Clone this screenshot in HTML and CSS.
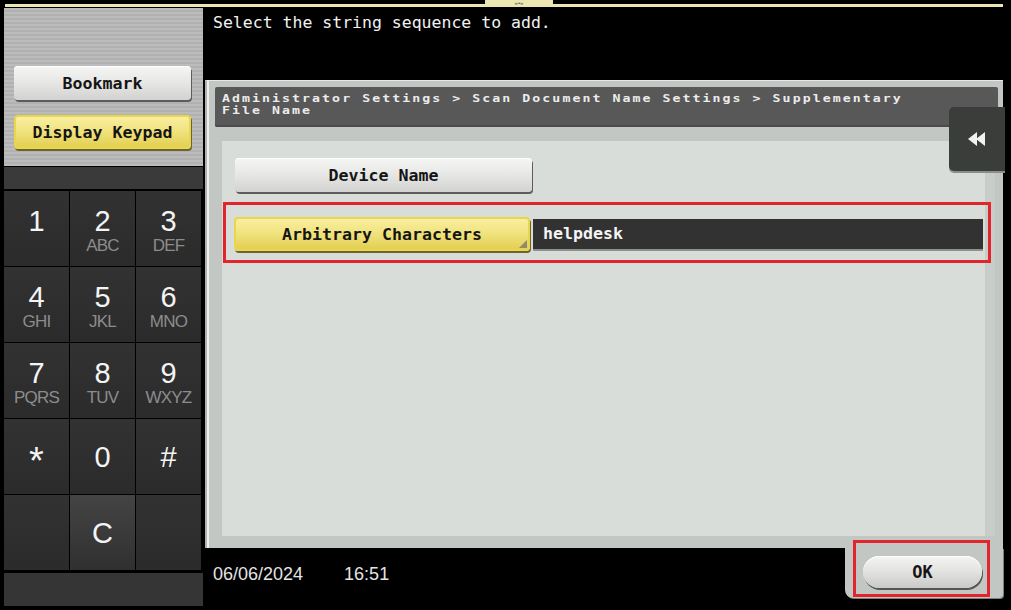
FILE: index.html
```html
<!DOCTYPE html>
<html>
<head>
<meta charset="utf-8">
<link rel="stylesheet" href="styles.css">
</head>
<body>
<div class="screen">
  <div class="topbar">
    <div class="topline"><span class="toptab">«•»</span></div>
  </div>
  <div class="body">
    <aside class="left">
      <div class="left-top">
        <button class="btn btn-gray side">Bookmark</button>
        <button class="btn btn-yellow side">Display Keypad</button>
      </div>
      <div class="strip"></div>
      <div class="keypad">
        <div class="key"><span class="num">1</span></div>
        <div class="key"><span class="num">2</span><span class="let">ABC</span></div>
        <div class="key"><span class="num">3</span><span class="let">DEF</span></div>
        <div class="key"><span class="num">4</span><span class="let">GHI</span></div>
        <div class="key"><span class="num">5</span><span class="let">JKL</span></div>
        <div class="key"><span class="num">6</span><span class="let">MNO</span></div>
        <div class="key"><span class="num">7</span><span class="let">PQRS</span></div>
        <div class="key"><span class="num">8</span><span class="let">TUV</span></div>
        <div class="key"><span class="num">9</span><span class="let">WXYZ</span></div>
        <div class="key center"><span class="sym star">*</span></div>
        <div class="key center"><span class="sym">0</span></div>
        <div class="key center"><span class="sym hash">#</span></div>
        <div class="key empty"></div>
        <div class="key center clear"><span class="sym">C</span></div>
        <div class="key empty"></div>
      </div>
      <div class="left-bottom"></div>
    </aside>
    <main class="right">
      <div class="instruction">Select the string sequence to add.</div>
      <section class="panel">
        <header class="crumb"><span class="crumb-line">Administrator Settings &gt; Scan Document Name Settings &gt; Supplementary</span><span class="crumb-line">File Name</span></header>
        <div class="back">
          <svg width="20" height="16" viewBox="0 0 20 16"><path d="M1 8 L10 1 L10 15 Z M9 8 L18 1 L18 15 Z" fill="#f2f2f2"/></svg>
        </div>
        <div class="content">
          <div class="content-inner">
            <button class="btn btn-gray option">Device Name</button>
            <div class="selected-row">
              <button class="btn btn-yellow option arb">Arbitrary Characters</button>
              <div class="field">helpdesk</div>
            </div>
          </div>
          <div class="scroll"></div>
        </div>
      </section>
      <footer class="footer">
        <span class="date">06/06/2024</span>
        <span class="time">16:51</span>
        <div class="ok-tab">
          <button class="ok">OK</button>
        </div>
      </footer>
    </main>
  </div>
</div>
</body>
</html>
```

FILE: styles.css
```css
*, *::before, *::after { box-sizing: border-box; }
html, body {
  margin: 0;
  padding: 0;
  background: #000;
}
.screen {
  width: 1011px;
  height: 610px;
  overflow: hidden;
  background: #000;
  font-family: "Liberation Sans", Arial, sans-serif;
}
.topbar {
  height: 8px;
  padding-top: 4px;
  padding-left: 5px;
}
.topline {
  width: 998px;
  height: 3px;
  background: #ece6b2;
  display: flex;
  justify-content: center;
}
.toptab {
  margin-left: 30px;
  margin-top: -4px;
  height: 6px;
  padding: 0 30px;
  background: #ece6b2;
  color: #555;
  font-size: 6px;
  line-height: 6px;
  border-radius: 0 0 3px 3px;
}
.body {
  display: flex;
  height: 602px;
}
.left {
  width: 203px;
  padding-left: 4px;
  display: flex;
  flex-direction: column;
}
.left-top {
  height: 158px;
  padding: 58px 0 0 10px;
  background: repeating-linear-gradient(to bottom, #bcbcbc 0px, #bcbcbc 2px, #b1b1b1 2px, #b1b1b1 4px);
  display: flex;
  flex-direction: column;
  gap: 15px;
}
.btn {
  font-family: "DejaVu Sans Mono", "Liberation Mono", monospace;
  font-weight: bold;
  font-size: 16.6px;
  color: #151515;
  border: none;
  padding: 0;
  cursor: default;
}
.btn-gray {
  background: linear-gradient(to bottom, #f6f6f4 0%, #e6e7e4 50%, #d2d3d0 100%);
  border-radius: 4px;
  box-shadow: 1px 2px 0 #5c5c5c, inset 0 1px 0 #ffffff;
}
.btn-yellow {
  background: linear-gradient(to bottom, #f8efa0 0%, #f0e27c 50%, #e2cf52 100%);
  border: 2px solid #ead64a;
  border-radius: 4px;
  box-shadow: 1px 2px 0 #6b6430;
}
.side {
  width: 177px;
  height: 34px;
}
.strip {
  height: 22px;
  margin-top: 1px;
  background: #3a3a3a;
}
.keypad {
  margin-top: 2px;
  display: grid;
  grid-template-columns: 65px 65px 65px;
  grid-template-rows: repeat(5, 75px);
  gap: 1px;
  background: #000;
}
.key {
  background: linear-gradient(to bottom, #323232, #2b2b2b);
  display: flex;
  flex-direction: column;
  align-items: center;
  padding-top: 17px;
  color: #f4f4f4;
}
.key.center {
  justify-content: center;
  padding-top: 0;
}
.key.clear {
  background: linear-gradient(to bottom, #444444, #303030);
}
.num {
  font-size: 29px;
  line-height: 27px;
}
.let {
  margin-top: 2px;
  font-family: "Liberation Sans Narrow", "Liberation Sans", sans-serif;
  font-stretch: condensed;
  font-size: 17px;
  line-height: 18px;
  color: #8c8c8c;
  letter-spacing: -0.8px;
}
.sym {
  font-size: 29px;
  line-height: 30px;
}
.star {
  font-size: 38px;
  line-height: 30px;
  padding-top: 9px;
}
.left-bottom {
  height: 33px;
  margin-top: 3px;
  background: #353535;
}
.right {
  flex: 1;
  display: flex;
  flex-direction: column;
}
.instruction {
  height: 72px;
  padding: 5px 0 0 10px;
  font-family: "DejaVu Sans Mono", "Liberation Mono", monospace;
  font-size: 16.5px;
  line-height: 20px;
  color: #f2f2f2;
}
.panel {
  position: relative;
  margin-left: 2px;
  width: 798px;
  height: 468px;
  padding: 6px 5px 0 8px;
  background: #c3c7c3;
  border-left: 2px solid #aeb2ae;
  border-top: 1px solid #e6e8e6;
  box-shadow: inset 2px 0 0 #eef0ee;
}
.crumb {
  height: 40px;
  padding: 6px 0 0 7px;
  background: #585858;
  border-radius: 2px;
  box-shadow: inset 0 -2px 0 #4a4a4a;
  color: #ececec;
  font-family: "DejaVu Sans Mono", "Liberation Mono", monospace;
  font-weight: bold;
  font-size: 11px;
  letter-spacing: 1.72px;
  display: flex;
  flex-direction: column;
  align-items: flex-start;
}
.crumb-line {
  display: block;
  line-height: 12px;
  height: 12px;
  white-space: nowrap;
  transform: scaleX(1.2);
  transform-origin: left center;
}
.back {
  position: absolute;
  z-index: 2;
  left: 742px;
  top: 26px;
  width: 56px;
  height: 64px;
  background: #3b3d3b;
  border-radius: 5px 0 0 5px;
  box-shadow: 0 2px 0 #8a8e8a;
  display: flex;
  align-items: center;
  justify-content: center;
}
.content {
  margin-top: 14px;
  margin-left: 7px;
  height: 395px;
  display: flex;
}
.content-inner {
  position: relative;
  z-index: 1;
  width: 763px;
  background: #d9ddd9;
  padding: 17px 0 0 0;
  display: flex;
  flex-direction: column;
}
.scroll {
  width: 10px;
  background: #c9cdc9;
}
.option {
  width: 297px;
  height: 34px;
}
.content-inner > .option {
  margin-left: 13px;
}
.selected-row {
  margin-top: 10px;
  margin-left: 1px;
  width: 768px;
  height: 61px;
  border: 3px solid #e2242c;
  padding: 12px 5px 0 8px;
  display: flex;
  align-items: flex-start;
}
.arb {
  position: relative;
  width: 296px;
}
.arb::after {
  content: "";
  position: absolute;
  right: 1px;
  bottom: 1px;
  border-style: solid;
  border-width: 0 0 8px 8px;
  border-color: transparent transparent #8d8a70 transparent;
}
.field {
  margin-left: 3px;
  margin-top: 2px;
  flex: 1;
  height: 32px;
  background: #323232;
  border-bottom: 2px solid #8e928e;
  padding: 4px 0 0 10px;
  font-family: "DejaVu Sans Mono", "Liberation Mono", monospace;
  font-weight: bold;
  font-size: 16.6px;
  line-height: 22px;
  color: #f4f4f4;
}
.footer {
  display: flex;
  align-items: flex-start;
  height: 62px;
  padding-left: 10px;
}
.date, .time {
  margin-top: 16px;
  font-size: 18px;
  line-height: 20px;
  color: #e4e4e4;
}
.time {
  margin-left: 41px;
}
.ok-tab {
  position: relative;
  margin-left: auto;
  margin-right: 8px;
  width: 158px;
  height: 50px;
  background: #c3c7c3;
  border-radius: 0 0 4px 8px;
  padding: 8px 0 0 18px;
  box-shadow: 1px 1px 0 #7c807c;
}
.ok-tab::after {
  content: "";
  position: absolute;
  left: 8px;
  top: -8px;
  width: 137px;
  height: 57px;
  border: 3px solid #e2242c;
}
.ok {
  width: 119px;
  height: 32px;
  border: none;
  border-radius: 16px;
  background: linear-gradient(to bottom, #f4f4f2 0%, #e2e3e0 50%, #c9cac7 100%);
  box-shadow: 1px 2px 0 #555, inset 0 1px 0 #fff;
  font-family: "DejaVu Sans Mono", "Liberation Mono", monospace;
  font-weight: bold;
  font-size: 17px;
  color: #151515;
  padding: 0;
}
```
